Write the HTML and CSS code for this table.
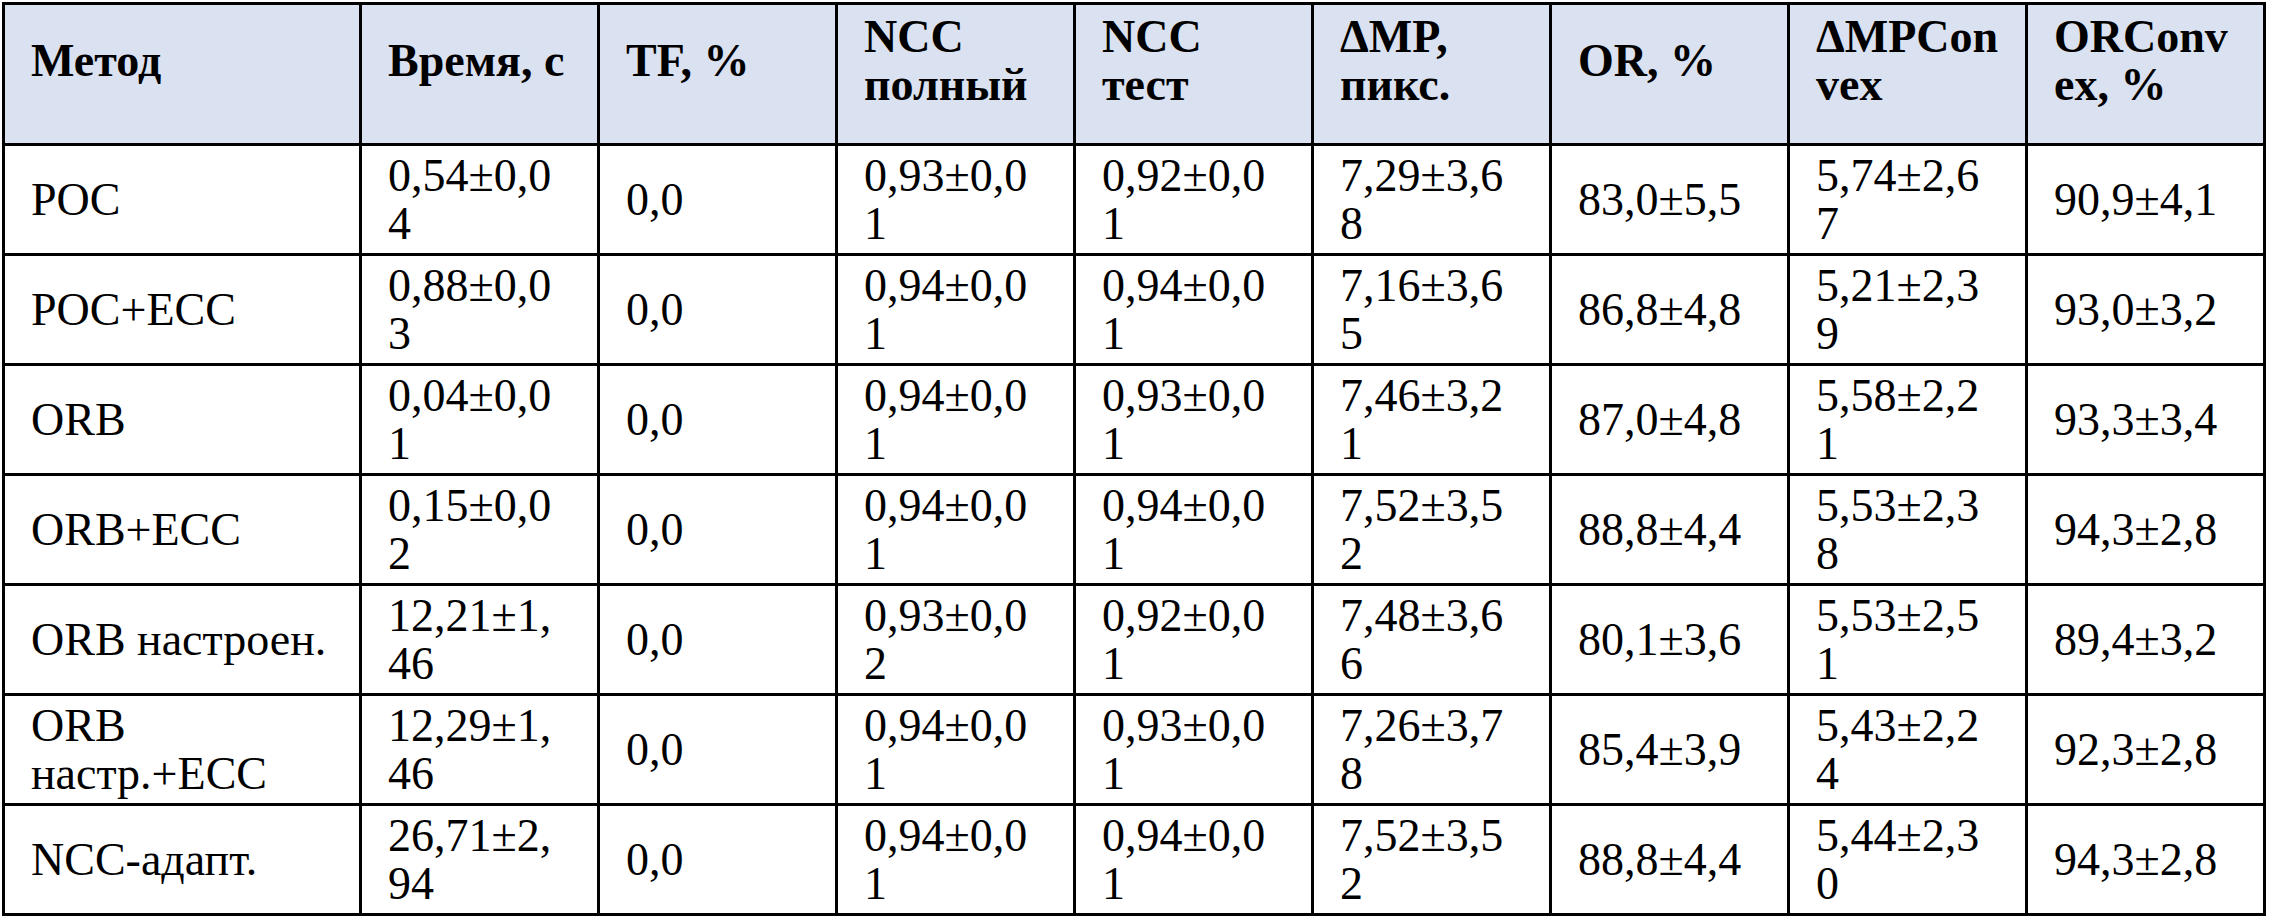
FILE: index.html
```html
<!DOCTYPE html>
<html lang="ru">
<head>
<meta charset="utf-8">
<title>Сравнение методов</title>
<link rel="stylesheet" href="styles.css">
</head>
<body>
<table class="results">
  <colgroup>
    <col class="c-method">
    <col class="c-val"><col class="c-val"><col class="c-val"><col class="c-val">
    <col class="c-val"><col class="c-val"><col class="c-val"><col class="c-val">
  </colgroup>
  <thead>
    <tr>
      <th>Метод</th>
      <th>Время, с</th>
      <th>TF, %</th>
      <th>NCC полный</th>
      <th>NCC тест</th>
      <th>ΔMP, пикс.</th>
      <th>OR, %</th>
      <th>ΔMPCon<br>vex</th>
      <th>ORConv<br>ex, %</th>
    </tr>
  </thead>
  <tbody>
    <tr>
      <td>POC</td>
      <td class="num">0,54±0,04</td><td class="num">0,0</td><td class="num">0,93±0,01</td><td class="num">0,92±0,01</td>
      <td class="num">7,29±3,68</td><td class="num">83,0±5,5</td><td class="num">5,74±2,67</td><td class="num">90,9±4,1</td>
    </tr>
    <tr>
      <td>POC+ECC</td>
      <td class="num">0,88±0,03</td><td class="num">0,0</td><td class="num">0,94±0,01</td><td class="num">0,94±0,01</td>
      <td class="num">7,16±3,65</td><td class="num">86,8±4,8</td><td class="num">5,21±2,39</td><td class="num">93,0±3,2</td>
    </tr>
    <tr>
      <td>ORB</td>
      <td class="num">0,04±0,01</td><td class="num">0,0</td><td class="num">0,94±0,01</td><td class="num">0,93±0,01</td>
      <td class="num">7,46±3,21</td><td class="num">87,0±4,8</td><td class="num">5,58±2,21</td><td class="num">93,3±3,4</td>
    </tr>
    <tr>
      <td>ORB+ECC</td>
      <td class="num">0,15±0,02</td><td class="num">0,0</td><td class="num">0,94±0,01</td><td class="num">0,94±0,01</td>
      <td class="num">7,52±3,52</td><td class="num">88,8±4,4</td><td class="num">5,53±2,38</td><td class="num">94,3±2,8</td>
    </tr>
    <tr>
      <td>ORB настроен.</td>
      <td class="num">12,21±1,46</td><td class="num">0,0</td><td class="num">0,93±0,02</td><td class="num">0,92±0,01</td>
      <td class="num">7,48±3,66</td><td class="num">80,1±3,6</td><td class="num">5,53±2,51</td><td class="num">89,4±3,2</td>
    </tr>
    <tr>
      <td>ORB настр.+ECC</td>
      <td class="num">12,29±1,46</td><td class="num">0,0</td><td class="num">0,94±0,01</td><td class="num">0,93±0,01</td>
      <td class="num">7,26±3,78</td><td class="num">85,4±3,9</td><td class="num">5,43±2,24</td><td class="num">92,3±2,8</td>
    </tr>
    <tr>
      <td>NCC-адапт.</td>
      <td class="num">26,71±2,94</td><td class="num">0,0</td><td class="num">0,94±0,01</td><td class="num">0,94±0,01</td>
      <td class="num">7,52±3,52</td><td class="num">88,8±4,4</td><td class="num">5,44±2,30</td><td class="num">94,3±2,8</td>
    </tr>
  </tbody>
</table>
</body>
</html>
```

FILE: styles.css
```css
html, body {
  margin: 0;
  padding: 0;
  background: #ffffff;
}

body {
  padding: 2px 0 0 2px;
  font-family: "Liberation Serif", "Times New Roman", serif;
  color: #000000;
}

.results {
  border-collapse: collapse;
  table-layout: fixed;
  width: 2264px;
  font-size: 46px;
  line-height: 48px;
}

.c-method { width: 357px; }
.c-val { width: 238px; }

.results th,
.results td {
  border: 3px solid #000000;
  text-align: left;
  vertical-align: middle;
  padding: 0 30px 0 26px;
}

.results thead th {
  background: #dae1f1;
  font-weight: bold;
  height: 111px;
  padding-bottom: 27px;
}

.results tbody tr {
  height: 110px;
}

.results td.num {
  word-break: break-all;
}
```
